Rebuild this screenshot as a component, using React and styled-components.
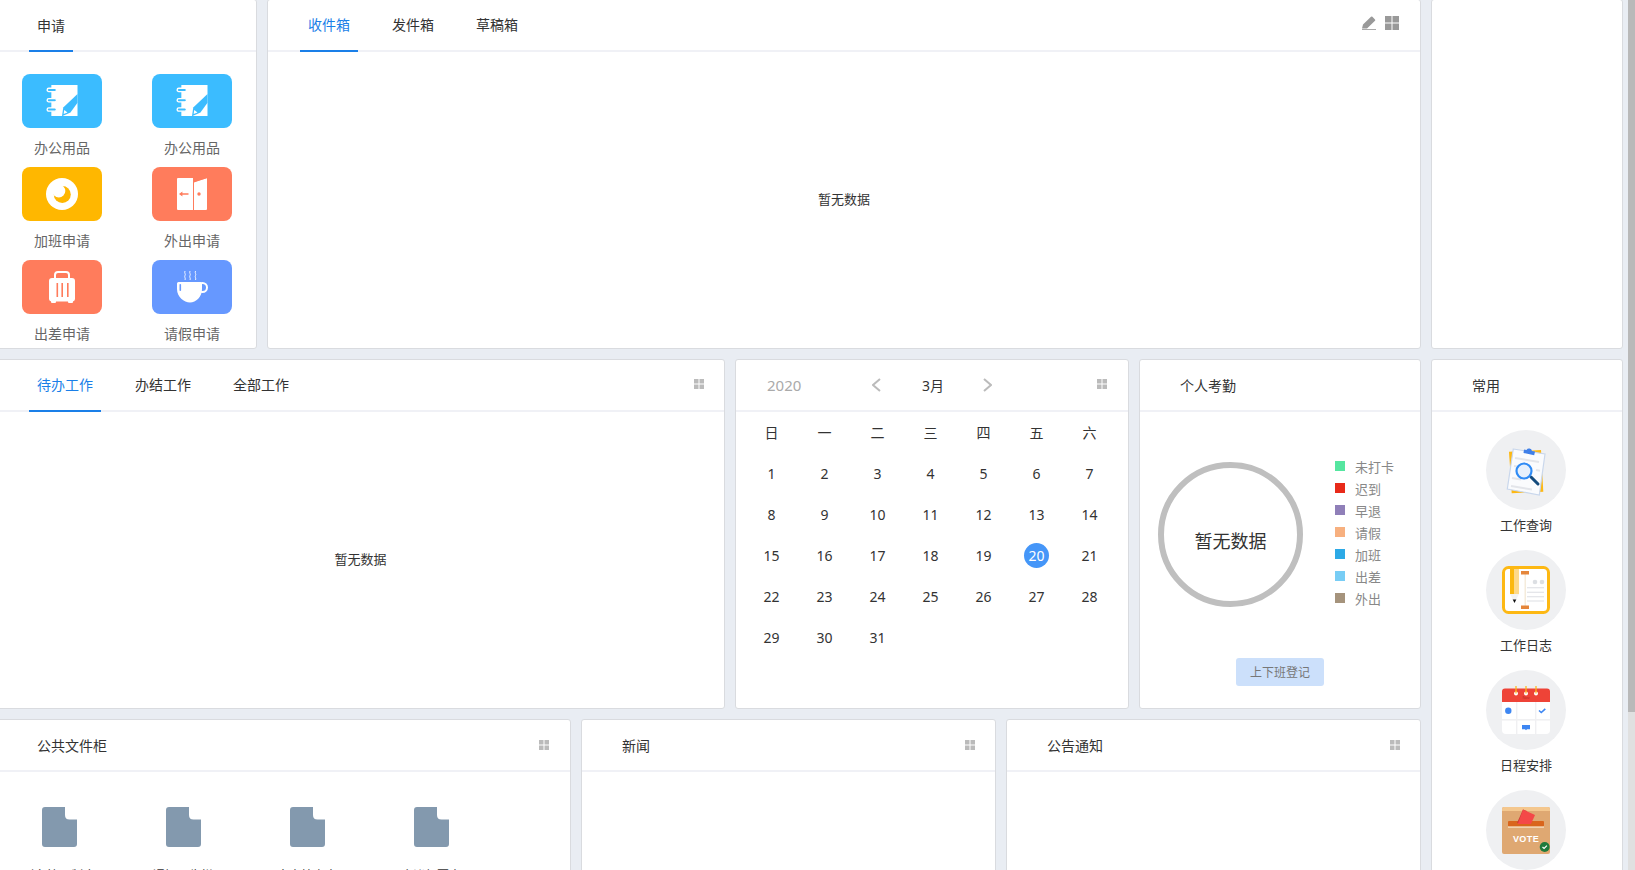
import React from 'react';
import styled, { createGlobalStyle } from 'styled-components';

const GlobalStyle = createGlobalStyle`
  html, body {
    margin: 0;
    height: 100%;
    overflow: hidden;
    background: #e9edf3;
    font-family: "Noto Sans", "Noto Sans CJK SC", sans-serif;
    font-size: 14px;
    color: #333;
  }
`;

/* 页面结构 */
const Page = styled.div`
  display: flex;
  height: 870px;
  overflow: hidden;
`;

const Canvas = styled.div`
  flex: 1;
  min-width: 0;
  overflow: hidden;
`;

const Board = styled.div`
  display: flex;
  gap: 10px;
  margin: -1px 0 0 -4px;
`;

const MainColumn = styled.div`
  flex: none;
  width: 1425px;
  display: flex;
  flex-direction: column;
  gap: 10px;
`;

const SideColumn = styled.div`
  flex: none;
  width: 192px;
  display: flex;
  flex-direction: column;
  gap: 10px;
`;

const Row = styled.div`
  display: flex;
  gap: 10px;
  height: ${p => p.$height}px;
`;

const ScrollTrack = styled.div`
  flex: none;
  width: 7px;
  background: #e0e0e0;
`;

const ScrollThumb = styled.div`
  height: 712px;
  background: #b9b9b9;
`;

/* 面板 */
const Panel = styled.section`
  flex: none;
  box-sizing: border-box;
  width: ${p => p.$width}px;
  height: ${p => (p.$height ? `${p.$height}px` : 'auto')};
  display: flex;
  flex-direction: column;
  overflow: hidden;
  background: #fff;
  border: 1px solid #d9dbdf;
  border-radius: 3px;
`;

const PanelHead = styled.header`
  flex: none;
  height: 50px;
  display: flex;
  padding-left: 32px;
  border-bottom: 2px solid #f0f1f6;
`;

const Tab = styled.div`
  box-sizing: border-box;
  height: 52px;
  margin: 0 26px -2px 0;
  padding: 0 8px;
  line-height: 50px;
  font-size: 14px;
  color: ${p => (p.$blue ? '#1a7fe8' : '#333')};
  border-bottom: 2px solid ${p => (p.$active ? '#1a7fe8' : 'transparent')};
`;

const PanelTitle = styled(Tab)`
  line-height: 52px;
`;

const HeadTools = styled.div`
  margin: ${p => p.$top}px ${p => p.$right || 20}px 0 auto;
  display: flex;
  align-items: flex-start;
  gap: 9px;
`;

const Empty = styled.div`
  flex: 1;
  display: flex;
  align-items: center;
  justify-content: center;
  padding-bottom: 3px;
  font-size: 13px;
  color: #333;
`;

/* 申请 */
const AppGrid = styled.div`
  display: grid;
  grid-template-columns: repeat(2, 130px);
  row-gap: 9px;
  padding-top: 22px;
`;

const AppItem = styled.div`
  display: flex;
  flex-direction: column;
  align-items: center;
`;

const AppTile = styled.div`
  width: 80px;
  height: 54px;
  display: flex;
  align-items: center;
  justify-content: center;
  border-radius: 8px;
  background: ${p => p.$color};
`;

const AppLabel = styled.div`
  margin-top: 10px;
  line-height: 20px;
  font-size: 14px;
  color: #666;
`;

/* 日历 */
const CalendarHead = styled(PanelHead)`
  padding-left: 31px;
  align-items: center;
`;

const Year = styled.div`
  width: 105px;
  font-size: 15px;
  color: #aaa;
`;

const Month = styled.div`
  width: 20px;
  margin: 0 41px;
  font-size: 14px;
  white-space: nowrap;
`;

const CalendarTools = styled(HeadTools)`
  align-self: flex-start;
`;

const DayGrid = styled.div`
  display: grid;
  grid-template-columns: repeat(7, 53px);
  grid-auto-rows: 41px;
  padding-left: 9px;
`;

const DayCell = styled.div`
  display: flex;
  align-items: center;
  justify-content: center;
  font-size: 14px;
`;

const WeekCell = styled(DayCell)`
  padding-bottom: 2px;
`;

const Today = styled.span`
  width: 25px;
  height: 25px;
  display: flex;
  align-items: center;
  justify-content: center;
  border-radius: 50%;
  background: #4596f8;
  color: #fff;
`;

/* 个人考勤 */
const AttendBody = styled.div`
  flex: 1;
  display: flex;
  flex-direction: column;
`;

const AttendTop = styled.div`
  display: flex;
  align-items: flex-start;
  gap: 32px;
  padding: 43px 0 0 18px;
`;

const Ring = styled.div`
  box-sizing: border-box;
  width: 145px;
  height: 145px;
  margin-top: 7px;
  padding-top: 11px;
  display: flex;
  align-items: center;
  justify-content: center;
  border: 6px solid #bfbfbf;
  border-radius: 50%;
  font-size: 18px;
`;

const Legend = styled.ul`
  margin: 0;
  padding: 0;
  list-style: none;
`;

const LegendItem = styled.li`
  display: flex;
  align-items: center;
  gap: 10px;
  height: 22px;
  font-size: 13px;
  color: #888;
`;

const Swatch = styled.i`
  width: 10px;
  height: 10px;
  background: ${p => p.$color};
`;

const ClockButton = styled.button`
  align-self: flex-start;
  width: 88px;
  height: 28px;
  margin: auto 0 22px 96px;
  padding: 0;
  border: 0;
  border-radius: 3px;
  background: #cce0fb;
  font: inherit;
  font-size: 12px;
  color: #777;
`;

/* 公共文件柜 */
const FileRow = styled.div`
  display: flex;
  padding-top: 35px;
`;

const FileItem = styled.div`
  flex: none;
  width: 124px;
  display: flex;
  flex-direction: column;
  align-items: center;
`;

const FileName = styled.div`
  margin-top: 19px;
  line-height: 20px;
  font-size: 12px;
  white-space: nowrap;
`;

/* 常用 */
const QuickList = styled.div`
  display: flex;
  flex-direction: column;
  align-items: center;
  gap: 15px;
  padding: 18px 2px 0 0;
`;

const QuickItem = styled.div`
  display: flex;
  flex-direction: column;
  align-items: center;
`;

const QuickCircle = styled.div`
  width: 80px;
  height: 80px;
  display: flex;
  align-items: center;
  justify-content: center;
  border-radius: 50%;
  background: #eff0f2;

  svg {
    overflow: visible;
  }
`;

const QuickLabel = styled.div`
  margin-top: 5px;
  line-height: 20px;
  font-size: 13px;
`;

/* 图标 */
const GridIcon = ({ size = 10, color = '#bbb' }) => {
  const s = (size - 1) / 2;
  return (
    <svg width={size} height={size} viewBox={`0 0 ${size} ${size}`}>
      <g fill={color}>
        <rect width={s} height={s} />
        <rect x={s + 1} width={s} height={s} />
        <rect y={s + 1} width={s} height={s} />
        <rect x={s + 1} y={s + 1} width={s} height={s} />
      </g>
    </svg>
  );
};

const PencilIcon = () => (
  <svg width="14" height="14" viewBox="0 0 14 14">
    <path fill="#999" d="M0 12.500 1 8.500 9 .8a1 1 0 0 1 1.400 0L13 3.400a1 1 0 0 1 0 1.400L5 12.500z" />
    <rect y="13" width="14" height="1" fill="#aaa" />
  </svg>
);

const Chevron = ({ right }) => (
  <svg width="9" height="14" viewBox="0 0 9 14">
    <path
      d={right ? 'M1 1l7 6-7 6' : 'M8 1L1 7l7 6'}
      fill="none"
      stroke="#bbb"
      strokeWidth="2"
    />
  </svg>
);

const NotebookIcon = ({ color }) => (
  <svg width="32" height="32" viewBox="0 0 32 33">
    <path fill="#fff" d="M5 0h27v32H5z" />
    <path fill={color} d="M32 9.300 17.300 23.300 16 32.300l8.700-4L32 18.300z" />
    <path fill="#fff" d="M18.300 25.700l-.6 4.300 4-1.700z" />
    <g fill={color} stroke="#fff" strokeWidth="1.400">
      <rect x=".7" y="3.400" width="9.600" height="3.400" rx="1.700" />
      <rect x=".7" y="14" width="9.600" height="3.400" rx="1.700" />
      <rect x=".7" y="23.600" width="9.600" height="3.400" rx="1.700" />
    </g>
  </svg>
);

const MoonIcon = ({ color }) => (
  <svg width="32" height="32" viewBox="0 0 32 32">
    <circle cx="16" cy="16" r="16" fill="#fff" />
    <circle cx="16.300" cy="16.500" r="8.500" fill={color} />
    <circle cx="12.800" cy="13" r="6.500" fill="#fff" />
  </svg>
);

const DoorIcon = ({ color }) => (
  <svg width="30" height="32" viewBox="0 0 30 32">
    <path fill="#fff" d="M1 0h15v32H1a1 1 0 0 1-1-1V1a1 1 0 0 1 1-1z" />
    <path fill="#fff" d="M17 4.600 28.600.4A1 1 0 0 1 30 1.400V31a1 1 0 0 1-1 1H17z" />
    <path fill="none" stroke={color} strokeWidth=".9" d="M16.500 32V3.600L29 0" />
    <path fill={color} d="M2 16l3.400-2.400v1.700H11.500v1.400H5.400v1.700z" />
    <circle cx="22" cy="16" r="1.700" fill={color} />
  </svg>
);

const LuggageIcon = ({ color }) => (
  <svg width="26" height="32" viewBox="0 0 26 32">
    <path fill="none" stroke="#fff" strokeWidth="2" d="M6 8V4a3 3 0 0 1 3-3h8a3 3 0 0 1 3 3v4" />
    <rect y="7" width="26" height="23.500" rx="3" fill="#fff" />
    <rect x="2" y="29" width="5" height="3" rx="1" fill="#fff" />
    <rect x="19" y="29" width="5" height="3" rx="1" fill="#fff" />
    <g fill={color}>
      <rect x="7.500" y="12" width="1.600" height="14" />
      <rect x="12.400" y="12" width="1.600" height="14" />
      <rect x="18" y="12" width="1.600" height="14" />
    </g>
  </svg>
);

const CupIcon = ({ color }) => (
  <svg width="34" height="32" viewBox="-2 0 34 32">
    <g fill="none" stroke="#fff" strokeWidth=".9">
      <path d="M8 0c-1 2 1 3 0 4.500s1 3 0 4.500" />
      <path d="M13 0c-1 2 1 3 0 4.500s1 3 0 4.500" />
      <path d="M18.500 0c-1 2 1 3 0 4.500s1 3 0 4.500" />
    </g>
    <circle cx="25.500" cy="16.500" r="4.500" fill="none" stroke="#fff" strokeWidth="2" />
    <path fill="#fff" d="M1.500 11h22A1.500 1.500 0 0 1 25 12.500V18c0 8-6 13.500-12 13.500S0 26 0 18v-5.500A1.500 1.500 0 0 1 1.500 11z" />
    <rect x="2.500" y="13" width="1.600" height="7" rx=".8" fill={color} />
  </svg>
);

const SearchDocIcon = () => (
  <svg width="48" height="48" viewBox="0 0 48 48">
    <path fill="#fdb813" d="M7 5.700 39 4l2.300 41.700-31.600 1.600z" />
    <path fill="#fafbfd" stroke="#c9d7ec" strokeWidth="1.200" d="M11.300 3 43 8 37.300 49 5.300 43z" />
    <path fill="#3f7fe8" d="M22 3.500 24.500 4a3 3 0 0 1 5.500 1l3 .6-.8 3.600L21.500 7z" />
    <g stroke="#e3e5ea" strokeWidth="2">
      <path d="M13 12l24 4" />
      <path d="M12 20l6 1" />
      <path d="M34 24l4 .7" />
      <path d="M10 32l9 1.600" />
      <path d="M9 40l21 3.600" />
    </g>
    <path stroke="#134a7c" strokeWidth="3" strokeLinecap="round" d="M29 31l7 7" />
    <circle cx="22" cy="25" r="7.500" fill="#e6f0fc" stroke="#2f8bf5" strokeWidth="2.200" />
  </svg>
);

const DiaryIcon = () => (
  <svg width="48" height="48" viewBox="0 0 48 48">
    <rect x="1.500" y="1.500" width="45" height="45" rx="5" fill="#fff" stroke="#fdb813" strokeWidth="3" />
    <rect x="8" y="3" width="4.500" height="25" fill="#fbb80f" />
    <rect x="12.500" y="3" width="4.500" height="25" fill="#fdd98a" />
    <path fill="#f2f2f2" d="M8 28h9l-4.500 9z" />
    <path fill="#111" d="M10.700 33.400h3.600l-1.800 3.600z" />
    <rect x="22.500" y="5" width="1.500" height="38" fill="#f5ecdc" />
    <rect x="19" y="5" width="8" height="3.500" fill="#e5863a" />
    <rect x="19" y="39.500" width="8" height="3.500" fill="#e5863a" />
    <circle cx="33" cy="16" r="2.300" fill="#dcdfe3" />
    <circle cx="40" cy="16" r="2.300" fill="#dcdfe3" />
    <g stroke="#e2e4e8" strokeWidth="1.200">
      <path d="M25 21.700h17" />
      <path d="M25 26.300h17" />
      <path d="M25 30.700h17" />
      <path d="M25 35h17" />
    </g>
  </svg>
);

const ScheduleIcon = () => (
  <svg width="48" height="48" viewBox="0 0 48 48">
    <path fill="#fff" d="M0 15h48v29a4 4 0 0 1-4 4H4a4 4 0 0 1-4-4z" />
    <path fill="#ee4337" d="M3 2.500h42a3 3 0 0 1 3 3V16H0V5.500a3 3 0 0 1 3-3z" />
    <text x="24" y="12.500" textAnchor="middle" fontSize="4" fill="#b92c22" fontFamily="Liberation Sans">Nov</text>
    <g fill="#f0f0f2">
      <rect x="14" y="16" width="1.400" height="32" />
      <rect x="33" y="16" width="1.400" height="32" />
      <rect y="33" width="48" height="1.600" />
    </g>
    <circle cx="6.300" cy="24.700" r="3.200" fill="#3d86f2" />
    <path fill="none" stroke="#3d86f2" strokeWidth="1.600" d="M37 24.500l2.300 2 4-3.600" />
    <path fill="#3d86f2" d="M20 39h8v4.300h-3l-1 1-1-1h-3z" />
    <g fill="#fff">
      <circle cx="14" cy="7.500" r="2" />
      <circle cx="24" cy="7.500" r="2" />
      <circle cx="34" cy="7.500" r="2" />
    </g>
    <g fill="#fdb813">
      <rect x="13.400" y="0" width="1.200" height="7.500" />
      <rect x="23.400" y="0" width="1.200" height="7.500" />
      <rect x="33.400" y="0" width="1.200" height="7.500" />
    </g>
  </svg>
);

const VoteIcon = () => (
  <svg width="48" height="48" viewBox="0 0 48 48">
    <path fill="#dfa872" d="M2 1h44a2 2 0 0 1 2 2v43a2 2 0 0 1-2 2H2a2 2 0 0 1-2-2V3a2 2 0 0 1 2-2z" />
    <path fill="#f4c78e" d="M2 1h44a2 2 0 0 1 2 2v2H0V3a2 2 0 0 1 2-2z" />
    <rect x="6" y="15" width="36" height="5.500" rx="1" fill="#d9651c" />
    <rect x="6" y="20.500" width="36" height="1.200" fill="#f7e3c8" />
    <path fill="#c93a34" d="M21 3.500 15 17h4l6-12z" />
    <path fill="#f44848" d="M21 3.500l12 5.500-4 9H15.800z" />
    <text x="24" y="36" textAnchor="middle" fontSize="9" fontWeight="700" letterSpacing=".4" fill="#fff" fontFamily="Liberation Sans">VOTE</text>
    <circle cx="42.700" cy="41" r="5" fill="#1f7a3c" />
    <path fill="none" stroke="#fff" strokeWidth="1.200" d="M40.500 41l1.600 1.500 2.800-2.800" />
  </svg>
);

const FileIcon = () => (
  <svg width="35" height="40" viewBox="0 0 35 40">
    <path
      fill="#8399ae"
      d="M3 0h20v8q0 4.500 4.500 4.500H35V37a3 3 0 0 1-3 3H3a3 3 0 0 1-3-3V3a3 3 0 0 1 3-3z"
    />
  </svg>
);

/* 数据 */
const apps = [
  { label: '办公用品', color: '#3bbcff', Icon: NotebookIcon },
  { label: '办公用品', color: '#3bbcff', Icon: NotebookIcon },
  { label: '加班申请', color: '#ffb700', Icon: MoonIcon },
  { label: '外出申请', color: '#ff7c5c', Icon: DoorIcon },
  { label: '出差申请', color: '#ff7c5c', Icon: LuggageIcon },
  { label: '请假申请', color: '#6698ff', Icon: CupIcon },
];

const weekDays = ['日', '一', '二', '三', '四', '五', '六'];
const days = Array.from({ length: 31 }, (_, i) => i + 1);

const legend = [
  { label: '未打卡', color: '#55e6a0' },
  { label: '迟到', color: '#e82a1a' },
  { label: '早退', color: '#8f7fb8' },
  { label: '请假', color: '#f7b07f' },
  { label: '加班', color: '#2ca9e6' },
  { label: '出差', color: '#78cdf5' },
  { label: '外出', color: '#a5937c' },
];

const files = ['财务管理制度', '通知公告栏', '人事档案表', '会议纪要表'];

const quickLinks = [
  { label: '工作查询', Icon: SearchDocIcon },
  { label: '工作日志', Icon: DiaryIcon },
  { label: '日程安排', Icon: ScheduleIcon },
  { label: '投票管理', Icon: VoteIcon },
];

const App = function App() {
  return (
    <Page>
      <GlobalStyle />
      <Canvas>
        <Board>
          <MainColumn>
            <Row $height={350}>
              <Panel $width={261}>
                <PanelHead>
                  <PanelTitle $active>申请</PanelTitle>
                </PanelHead>
                <AppGrid>
                  {apps.map(({ label, color, Icon }, i) => (
                    <AppItem key={i}>
                      <AppTile $color={color}>
                        <Icon color={color} />
                      </AppTile>
                      <AppLabel>{label}</AppLabel>
                    </AppItem>
                  ))}
                </AppGrid>
              </Panel>
              <Panel $width={1154}>
                <PanelHead>
                  <Tab $active $blue>收件箱</Tab>
                  <Tab>发件箱</Tab>
                  <Tab>草稿箱</Tab>
                  <HeadTools $top={16} $right={21}>
                    <PencilIcon />
                    <GridIcon size={14} color="#999" />
                  </HeadTools>
                </PanelHead>
                <Empty>暂无数据</Empty>
              </Panel>
            </Row>

            <Row $height={350}>
              <Panel $width={729}>
                <PanelHead>
                  <Tab $active $blue>待办工作</Tab>
                  <Tab>办结工作</Tab>
                  <Tab>全部工作</Tab>
                  <HeadTools $top={19}>
                    <GridIcon />
                  </HeadTools>
                </PanelHead>
                <Empty>暂无数据</Empty>
              </Panel>

              <Panel $width={394}>
                <CalendarHead>
                  <Year>2020</Year>
                  <Chevron />
                  <Month>3月</Month>
                  <Chevron right />
                  <CalendarTools $top={19} $right={21}>
                    <GridIcon />
                  </CalendarTools>
                </CalendarHead>
                <DayGrid>
                  {weekDays.map(d => (
                    <WeekCell key={d}>{d}</WeekCell>
                  ))}
                  {days.map(d => (
                    <DayCell key={d}>{d === 20 ? <Today>{d}</Today> : d}</DayCell>
                  ))}
                </DayGrid>
              </Panel>

              <Panel $width={282}>
                <PanelHead>
                  <PanelTitle>个人考勤</PanelTitle>
                </PanelHead>
                <AttendBody>
                  <AttendTop>
                    <Ring>暂无数据</Ring>
                    <Legend>
                      {legend.map(({ label, color }) => (
                        <LegendItem key={label}>
                          <Swatch $color={color} />
                          {label}
                        </LegendItem>
                      ))}
                    </Legend>
                  </AttendTop>
                  <ClockButton>上下班登记</ClockButton>
                </AttendBody>
              </Panel>
            </Row>

            <Row $height={200}>
              <Panel $width={575}>
                <PanelHead>
                  <PanelTitle>公共文件柜</PanelTitle>
                  <HeadTools $top={20} $right={21}>
                    <GridIcon />
                  </HeadTools>
                </PanelHead>
                <FileRow>
                  {files.map(name => (
                    <FileItem key={name}>
                      <FileIcon />
                      <FileName>{name}</FileName>
                    </FileItem>
                  ))}
                </FileRow>
              </Panel>
              <Panel $width={415}>
                <PanelHead>
                  <PanelTitle>新闻</PanelTitle>
                  <HeadTools $top={20}>
                    <GridIcon />
                  </HeadTools>
                </PanelHead>
              </Panel>
              <Panel $width={415}>
                <PanelHead>
                  <PanelTitle>公告通知</PanelTitle>
                  <HeadTools $top={20}>
                    <GridIcon />
                  </HeadTools>
                </PanelHead>
              </Panel>
            </Row>
          </MainColumn>

          <SideColumn>
            <Panel $width={192} $height={350} />
            <Panel $width={192} $height={560}>
              <PanelHead>
                <PanelTitle>常用</PanelTitle>
              </PanelHead>
              <QuickList>
                {quickLinks.map(({ label, Icon }) => (
                  <QuickItem key={label}>
                    <QuickCircle>
                      <Icon />
                    </QuickCircle>
                    <QuickLabel>{label}</QuickLabel>
                  </QuickItem>
                ))}
              </QuickList>
            </Panel>
          </SideColumn>
        </Board>
      </Canvas>
      <ScrollTrack>
        <ScrollThumb />
      </ScrollTrack>
    </Page>
  );
};

export default App;
